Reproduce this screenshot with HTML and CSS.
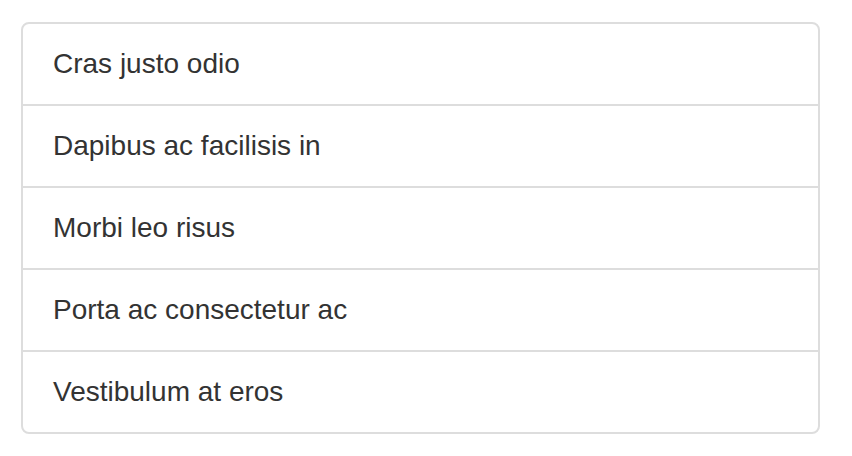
FILE: index.html
```html
<!DOCTYPE html>
<html>
<head>
<meta charset="utf-8">
<link rel="stylesheet" href="styles.css">
</head>
<body>
<ul class="list-group">
  <li class="list-group-item">Cras justo odio</li>
  <li class="list-group-item">Dapibus ac facilisis in</li>
  <li class="list-group-item">Morbi leo risus</li>
  <li class="list-group-item">Porta ac consectetur ac</li>
  <li class="list-group-item">Vestibulum at eros</li>
</ul>
</body>
</html>
```

FILE: styles.css
```css
html, body {
  margin: 0;
  padding: 0;
  background: #fff;
}
body {
  font-family: "Liberation Sans", Arial, sans-serif;
  font-size: 28px;
  color: #333;
  padding: 22px 0 0 21px;
}
.list-group {
  list-style: none;
  margin: 0;
  padding: 0;
  width: 799px;
  box-sizing: border-box;
  border: 2px solid #ddd;
  border-radius: 8px;
  background: #fff;
}
.list-group-item {
  padding: 20px 30px;
  line-height: 40px;
  border-top: 2px solid #ddd;
}
.list-group-item:first-child {
  border-top: none;
}
```
